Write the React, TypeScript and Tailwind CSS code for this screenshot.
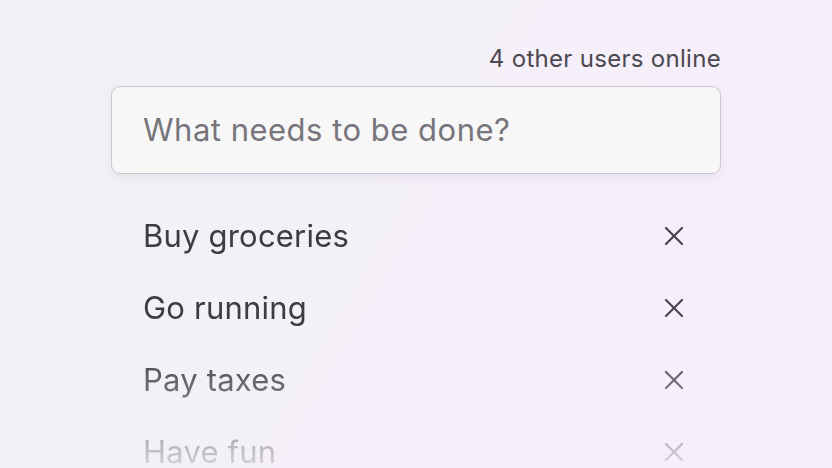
import React from "react";

const todos = ["Buy groceries", "Go running", "Pay taxes", "Have fun"];

function XIcon() {
  return (
    <svg width="20" height="20" viewBox="0 0 20 20" fill="none" stroke="currentColor" strokeWidth="2.2" strokeLinecap="round">
      <path d="M2 2 L18 18" />
      <path d="M18 2 L2 18" />
    </svg>
  );
}

export default function App() {
  return (
    <div
      className="w-[832px] h-[468px] overflow-hidden bg-[linear-gradient(120deg,#f2f0f4_0%,#f4f0f8_45%,#f6eefc_75%,#f5effa_100%)]"
      style={{ fontFamily: "Inter, 'Noto Sans', sans-serif" }}
    >
      <div className="mx-auto w-[610px] pt-[44px]">
        <div className="flex justify-end text-[24px] leading-[30px] text-[#4b4850] tracking-[0.3px]">4 other users online</div>
        <div className="mt-[12px] h-[88px] rounded-[9px] border border-[#cbc7ce] bg-[#f7f7f8] shadow-[0_4px_12px_rgba(120,100,140,0.08)] flex items-center pl-[31px]">
          <span className="text-[31px] text-[#77757b] tracking-[0.5px]">What needs to be done?</span>
        </div>
        <ul className="mt-[26px] [mask-image:linear-gradient(to_bottom,black_0px,black_150px,rgba(0,0,0,0.2)_262px)]">
          {todos.map((t) => (
            <li key={t} className="h-[72px] flex items-center justify-between pl-[32px] pr-[37px] text-[#3f3b44]">
              <span className="text-[31px] tracking-[0.2px]">{t}</span>
              <span className="text-[#4a4650]"><XIcon /></span>
            </li>
          ))}
        </ul>
      </div>
    </div>
  );
}
